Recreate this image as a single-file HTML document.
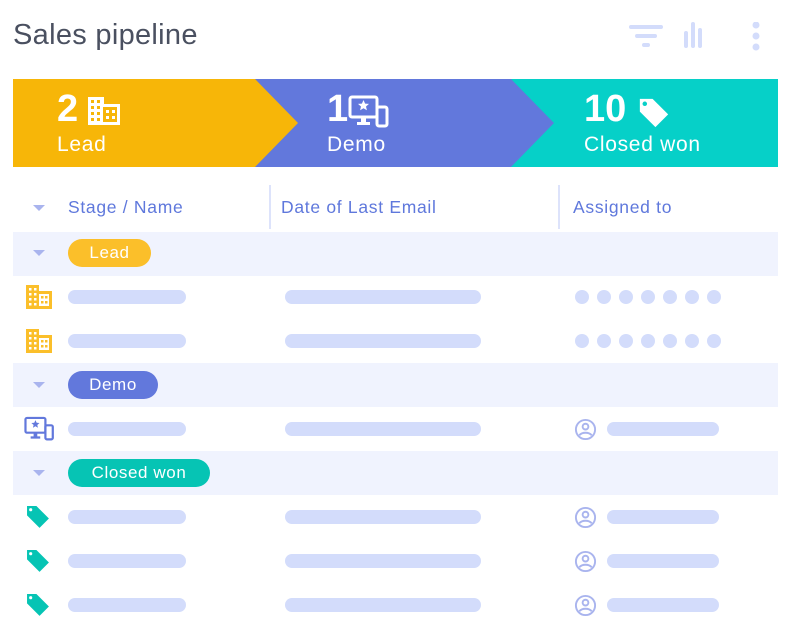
<!DOCTYPE html><html><head><meta charset="utf-8"><style>
*{margin:0;padding:0;box-sizing:border-box}
body{width:786px;height:627px;background:#fff;font-family:"Liberation Sans",sans-serif;position:relative;overflow:hidden}
.a{position:absolute}
.bar{position:absolute;height:14px;border-radius:7px;background:#d3dcfb}
.grp{position:absolute;left:13px;width:765px;height:44px;background:#f0f3fe}
.pill{position:absolute;height:28px;border-radius:14px;color:#fff;font-size:17px;line-height:28px;text-align:center;letter-spacing:0.6px}
.tri{position:absolute;left:33px;width:0;height:0;border-left:6px solid transparent;border-right:6px solid transparent;border-top:6px solid #a9b4ee}
.dot{position:absolute;width:14px;height:14px;border-radius:50%;background:#d3dcfb}
.th{position:absolute;top:197px;font-size:17.5px;color:#5f78dc;letter-spacing:0.7px}
.bt{position:absolute;top:133px;font-size:21px;color:#fff;letter-spacing:0.7px}
</style></head><body>
<div class="a" style="left:13px;top:19px;font-size:29px;color:#4a5060;letter-spacing:0.3px">Sales pipeline</div>
<svg class="a" style="left:628px;top:22px" width="140" height="30" viewBox="0 0 140 30">
<g fill="#d3dcfb"><rect x="1" y="3" width="34" height="4" rx="2"/><rect x="7" y="12" width="22" height="4" rx="2"/><rect x="14" y="21" width="8" height="4" rx="2"/>
<rect x="63" y="0" width="4" height="26" rx="2"/><rect x="70" y="6" width="4" height="20" rx="2"/><rect x="56" y="9" width="4" height="17" rx="2"/>
<circle cx="128" cy="3" r="3.5"/><circle cx="128" cy="14" r="3.5"/><circle cx="128" cy="25" r="3.5"/></g></svg>
<svg class="a" style="left:13px;top:79px" width="765" height="88">
<rect x="0" y="0" width="765" height="88" fill="#06d0c8"/>
<polygon points="0,0 498,0 541,44 498,88 0,88" fill="#6278dc"/>
<polygon points="0,0 242,0 285,44 242,88 0,88" fill="#f7b608"/>
</svg>
<div class="a" style="left:57px;top:88px;font-size:38px;font-weight:bold;color:#fff">2</div>
<svg class="a" style="left:88px;top:97px" width="32" height="28" viewBox="0 0 32 28"><path fill="#fff" d="M0 0h16v7h16v21H0z"/><g fill="#f7b608"><rect x="3" y="3" width="3" height="3"/><rect x="9" y="3" width="3" height="3"/><rect x="3" y="9" width="3" height="3"/><rect x="9" y="9" width="3" height="3"/><rect x="3" y="15" width="3" height="3"/><rect x="9" y="15" width="3" height="3"/><rect x="3" y="21" width="3" height="3"/><rect x="9" y="21" width="3" height="3"/><rect x="15" y="10" width="14" height="15"/></g><g fill="#fff"><rect x="18" y="13" width="3" height="3"/><rect x="24" y="13" width="3" height="3"/><rect x="18" y="19" width="3" height="3"/><rect x="24" y="19" width="3" height="3"/></g></svg>
<div class="bt" style="left:57px">Lead</div>
<div class="a" style="left:327px;top:88px;font-size:38px;font-weight:bold;color:#fff">1</div>
<svg class="a" style="left:348px;top:95px" width="42" height="34" viewBox="0 0 42 34"><g fill="none" stroke="#fff" stroke-width="3"><rect x="2" y="2" width="27" height="20" rx="2"/><rect x="29" y="12" width="10" height="19" rx="2"/></g><path fill="#fff" d="M13 22h5v5h4v3H9v-3h4z"/><path fill="#fff" d="M15.5 5l1.6 3.6 3.9.3-3 2.6.9 3.8-3.4-2-3.4 2 .9-3.8-3-2.6 3.9-.3z"/></svg>
<div class="bt" style="left:327px">Demo</div>
<div class="a" style="left:584px;top:88px;font-size:38px;font-weight:bold;color:#fff">10</div>
<svg class="a" style="left:637px;top:96px" width="34" height="34" viewBox="0 0 24 24"><path fill="#fff" d="M2 2h9l11 11-9 9L2 11z"/><circle cx="5.5" cy="5.5" r="1.6" fill="#06d0c8"/></svg>
<div class="bt" style="left:584px">Closed won</div>
<div class="tri" style="top:205px"></div>
<div class="th" style="left:68px">Stage / Name</div>
<div class="a" style="left:269px;top:185px;width:2px;height:44px;background:#dde3fb"></div>
<div class="th" style="left:281px">Date of Last Email</div>
<div class="a" style="left:558px;top:185px;width:2px;height:44px;background:#dde3fb"></div>
<div class="th" style="left:573px">Assigned to</div>

<div class="grp" style="top:232px"></div><div class="tri" style="top:250px"></div>
<div class="pill" style="left:68px;top:239px;width:83px;background:#fbbf2a">Lead</div>
<div class="grp" style="top:363px"></div><div class="tri" style="top:382px"></div>
<div class="pill" style="left:68px;top:371px;width:90px;background:#6278dc">Demo</div>
<div class="grp" style="top:451px"></div><div class="tri" style="top:470px"></div>
<div class="pill" style="left:68px;top:459px;width:142px;background:#06c4b4">Closed won</div>

<svg width="0" height="0" style="position:absolute"><defs>
<symbol id="bld" viewBox="0 0 26 24"><path fill="#fbbf2a" d="M0 0h13v6h13v18H0z"/><g fill="#fff"><rect x="3" y="3" width="2.5" height="2.5"/><rect x="8" y="3" width="2.5" height="2.5"/><rect x="3" y="8" width="2.5" height="2.5"/><rect x="8" y="8" width="2.5" height="2.5"/><rect x="3" y="13" width="2.5" height="2.5"/><rect x="8" y="13" width="2.5" height="2.5"/><rect x="3" y="18" width="2.5" height="2.5"/><rect x="8" y="18" width="2.5" height="2.5"/><rect x="13" y="9" width="10" height="12"/></g><g fill="#fbbf2a"><rect x="15" y="11" width="2.5" height="2.5"/><rect x="19" y="11" width="2.5" height="2.5"/><rect x="15" y="16" width="2.5" height="2.5"/><rect x="19" y="16" width="2.5" height="2.5"/></g></symbol>
<symbol id="tag" viewBox="0 0 24 24"><path fill="#06c4b4" d="M1 1h9l12 12-9 9L1 10z"/><circle cx="4.5" cy="4.5" r="1.5" fill="#fff"/></symbol>
<symbol id="usr" viewBox="0 0 24 24"><g fill="none" stroke="#a9b4ee" stroke-width="2"><circle cx="12" cy="12" r="10"/><circle cx="12" cy="9" r="3"/><path d="M5.5 18c3-3.5 10-3.5 13 0"/></g></symbol>
</defs></svg>
<svg class="a" style="left:26px;top:285px" width="26" height="24"><use href="#bld"/></svg>
<svg class="a" style="left:26px;top:329px" width="26" height="24"><use href="#bld"/></svg>
<svg class="a" style="left:24px;top:416px" width="31" height="26" viewBox="0 0 42 34"><g fill="none" stroke="#6278dc" stroke-width="3"><rect x="2" y="2" width="27" height="20" rx="2"/><rect x="29" y="12" width="10" height="19" rx="2"/></g><path fill="#6278dc" d="M13 22h5v5h4v3H9v-3h4z"/><path fill="#6278dc" d="M15.5 5l1.6 3.6 3.9.3-3 2.6.9 3.8-3.4-2-3.4 2 .9-3.8-3-2.6 3.9-.3z"/></svg>
<svg class="a" style="left:26px;top:505px" width="25" height="25"><use href="#tag"/></svg>
<svg class="a" style="left:26px;top:549px" width="25" height="25"><use href="#tag"/></svg>
<svg class="a" style="left:26px;top:593px" width="25" height="25"><use href="#tag"/></svg>

<div class="bar" style="left:68px;top:290px;width:118px"></div><div class="bar" style="left:285px;top:290px;width:196px"></div>
<div class="bar" style="left:68px;top:334px;width:118px"></div><div class="bar" style="left:285px;top:334px;width:196px"></div>
<div class="bar" style="left:68px;top:422px;width:118px"></div><div class="bar" style="left:285px;top:422px;width:196px"></div>
<div class="bar" style="left:68px;top:510px;width:118px"></div><div class="bar" style="left:285px;top:510px;width:196px"></div>
<div class="bar" style="left:68px;top:554px;width:118px"></div><div class="bar" style="left:285px;top:554px;width:196px"></div>
<div class="bar" style="left:68px;top:598px;width:118px"></div><div class="bar" style="left:285px;top:598px;width:196px"></div>

<div class="dot" style="left:575px;top:290px"></div><div class="dot" style="left:597px;top:290px"></div><div class="dot" style="left:619px;top:290px"></div><div class="dot" style="left:641px;top:290px"></div><div class="dot" style="left:663px;top:290px"></div><div class="dot" style="left:685px;top:290px"></div><div class="dot" style="left:707px;top:290px"></div>
<div class="dot" style="left:575px;top:334px"></div><div class="dot" style="left:597px;top:334px"></div><div class="dot" style="left:619px;top:334px"></div><div class="dot" style="left:641px;top:334px"></div><div class="dot" style="left:663px;top:334px"></div><div class="dot" style="left:685px;top:334px"></div><div class="dot" style="left:707px;top:334px"></div>

<svg class="a" style="left:574px;top:418px" width="23" height="23"><use href="#usr"/></svg><div class="bar" style="left:607px;top:422px;width:112px"></div>
<svg class="a" style="left:574px;top:506px" width="23" height="23"><use href="#usr"/></svg><div class="bar" style="left:607px;top:510px;width:112px"></div>
<svg class="a" style="left:574px;top:550px" width="23" height="23"><use href="#usr"/></svg><div class="bar" style="left:607px;top:554px;width:112px"></div>
<svg class="a" style="left:574px;top:594px" width="23" height="23"><use href="#usr"/></svg><div class="bar" style="left:607px;top:598px;width:112px"></div>
</body></html>
